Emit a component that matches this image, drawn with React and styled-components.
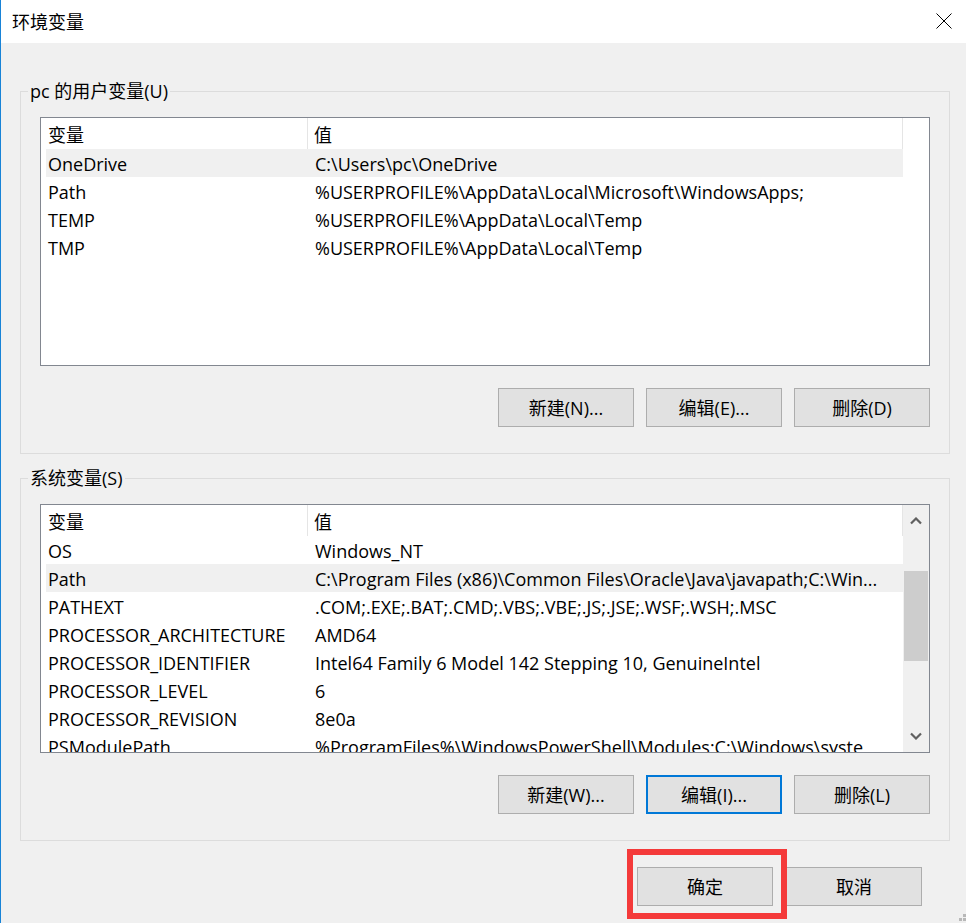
import React from "react";
import styled, { createGlobalStyle } from "styled-components";

const GlobalStyle = createGlobalStyle`
  html, body {
    margin: 0;
    padding: 0;
    background: #f0f0f0;
  }
  body {
    font-family: "Open Sans", "Noto Sans CJK SC", sans-serif;
    font-size: 18px;
    color: #000;
  }
  * {
    box-sizing: border-box;
  }
`;

const Window = styled.div`
  position: relative;
  width: 966px;
  height: 923px;
  display: flex;
  flex-direction: column;
  border-left: 1px solid #1883d7;
  background: #f0f0f0;
  overflow: hidden;
`;

const TitleBar = styled.div`
  height: 43px;
  flex-shrink: 0;
  background: #fff;
  display: flex;
  align-items: center;
  justify-content: space-between;
  padding: 0 14px 2px 11px;
`;

const Title = styled.div`
  font-family: "Noto Sans CJK SC", sans-serif;
  font-size: 18px;
  line-height: 24px;
`;

const CloseButton = styled.div`
  width: 16px;
  height: 16px;
  display: flex;
`;

const Body = styled.div`
  flex: 1;
  padding: 36px 16px 0 19px;
  display: flex;
  flex-direction: column;
`;

const Group = styled.fieldset`
  margin: 0 0 ${(p) => p.$gap || 0}px 0;
  padding: 14px 19px 26px 19px;
  border: 1px solid #dcdcdc;
  min-width: 0;
`;

const Legend = styled.legend`
  padding: 0 2px;
  margin-left: -12px;
  line-height: 24px;
  font-size: 18px;
`;

const ListBox = styled.div`
  height: 249px;
  border: 1px solid #828790;
  background: #fff;
  display: flex;
  overflow: hidden;
`;

const ListContent = styled.div`
  flex: 1;
  overflow: hidden;
  padding-left: 5px;
`;

const Header = styled.div`
  display: grid;
  grid-template-columns: 262px 595px;
  width: 857px;
  height: 31px;
`;

const HeaderCell = styled.div`
  border-right: 1px solid #e5e5e5;
  padding: 3px 0 0 ${(p) => (p.$value ? 6 : 2)}px;
  line-height: 28px;
  white-space: nowrap;
`;

const Row = styled.div`
  display: grid;
  grid-template-columns: 262px 595px;
  width: 857px;
  height: 28px;
  background: ${(p) => (p.$selected ? "#f0f0f0" : "transparent")};
`;

const Cell = styled.div`
  padding: 1px 0 0 ${(p) => (p.$value ? 7 : 2)}px;
  line-height: 28px;
  white-space: nowrap;
  overflow: hidden;
`;

const ScrollBar = styled.div`
  width: 26px;
  background: #f0f0f0;
  display: flex;
  flex-direction: column;
  align-items: center;
`;

const ArrowBox = styled.div`
  height: 32px;
  display: flex;
  align-items: center;
  justify-content: center;
`;

const Track = styled.div`
  flex: 1;
  width: 100%;
  padding: 34px 1px 0 1px;
`;

const Thumb = styled.div`
  height: 90px;
  background: #cdcdcd;
`;

const ButtonRow = styled.div`
  display: flex;
  justify-content: flex-end;
  gap: 12px;
  margin-top: 22px;
`;

const Button = styled.div`
  width: 136px;
  height: 39px;
  display: flex;
  align-items: center;
  justify-content: center;
  background: #e1e1e1;
  border: ${(p) => (p.$focused ? "2px solid #0078d7" : "1px solid #adadad")};
  font-size: 18px;
  padding-bottom: 1px;
`;

const Footer = styled.div`
  display: flex;
  justify-content: flex-end;
  gap: 13px;
  margin-top: 26px;
  padding-right: 28px;
`;

const Marked = styled.div`
  position: relative;
`;

const RedFrame = styled.div`
  position: absolute;
  top: -18px;
  left: -10px;
  right: -14px;
  bottom: -13px;
  border: 6px solid #f43a3a;
  z-index: 2;
  pointer-events: none;
`;

const Grip = styled.svg`
  position: absolute;
  right: 0;
  bottom: 1px;
`;

const userVars = [
  ["OneDrive", "C:\\Users\\pc\\OneDrive"],
  ["Path", "%USERPROFILE%\\AppData\\Local\\Microsoft\\WindowsApps;"],
  ["TEMP", "%USERPROFILE%\\AppData\\Local\\Temp"],
  ["TMP", "%USERPROFILE%\\AppData\\Local\\Temp"],
];

const systemVars = [
  ["OS", "Windows_NT"],
  ["Path", "C:\\Program Files (x86)\\Common Files\\Oracle\\Java\\javapath;C:\\Win..."],
  ["PATHEXT", ".COM;.EXE;.BAT;.CMD;.VBS;.VBE;.JS;.JSE;.WSF;.WSH;.MSC"],
  ["PROCESSOR_ARCHITECTURE", "AMD64"],
  ["PROCESSOR_IDENTIFIER", "Intel64 Family 6 Model 142 Stepping 10, GenuineIntel"],
  ["PROCESSOR_LEVEL", "6"],
  ["PROCESSOR_REVISION", "8e0a"],
  ["PSModulePath", "%ProgramFiles%\\WindowsPowerShell\\Modules;C:\\Windows\\syste"],
];

const Chevron = ({ down }) => (
  <svg width="12" height="8" viewBox="0 0 12 8">
    <polyline
      points={down ? "1,1.5 6,6.5 11,1.5" : "1,6.5 6,1.5 11,6.5"}
      fill="none"
      stroke="#606060"
      strokeWidth="2.2"
    />
  </svg>
);

const VarList = ({ rows, selected, scroll }) => (
  <ListBox>
    <ListContent>
      <Header>
        <HeaderCell>变量</HeaderCell>
        <HeaderCell $value>值</HeaderCell>
      </Header>
      {rows.map(([name, value], i) => (
        <Row key={name} $selected={i === selected}>
          <Cell>{name}</Cell>
          <Cell $value>{value}</Cell>
        </Row>
      ))}
    </ListContent>
    {scroll && (
      <ScrollBar>
        <ArrowBox>
          <Chevron />
        </ArrowBox>
        <Track>
          <Thumb />
        </Track>
        <ArrowBox>
          <Chevron down />
        </ArrowBox>
      </ScrollBar>
    )}
  </ListBox>
);

const App = () => {
  return (
    <>
      <GlobalStyle />
      <Window>
        <TitleBar>
          <Title>环境变量</Title>
          <CloseButton>
            <svg width="16" height="16" viewBox="0 0 16 16">
              <path d="M0.5 0.5 L15.5 15.5 M15.5 0.5 L0.5 15.5" stroke="#000" strokeWidth="1" />
            </svg>
          </CloseButton>
        </TitleBar>
        <Body>
          <Group $gap={12}>
            <Legend>pc 的用户变量(U)</Legend>
            <VarList rows={userVars} selected={0} />
            <ButtonRow>
              <Button>新建(N)...</Button>
              <Button>编辑(E)...</Button>
              <Button>删除(D)</Button>
            </ButtonRow>
          </Group>
          <Group>
            <Legend>系统变量(S)</Legend>
            <VarList rows={systemVars} selected={1} scroll />
            <ButtonRow>
              <Button>新建(W)...</Button>
              <Button $focused>编辑(I)...</Button>
              <Button>删除(L)</Button>
            </ButtonRow>
          </Group>
          <Footer>
            <Marked>
              <Button>确定</Button>
              <RedFrame />
            </Marked>
            <Button>取消</Button>
          </Footer>
        </Body>
        <Grip width="8" height="8" viewBox="0 0 8 8">
          <rect x="5" y="0" width="3" height="3" fill="#b8b8b8" />
          <rect x="1" y="4" width="3" height="3" fill="#b8b8b8" />
          <rect x="5" y="4" width="3" height="3" fill="#b8b8b8" />
        </Grip>
      </Window>
    </>
  );
};

export default App;
